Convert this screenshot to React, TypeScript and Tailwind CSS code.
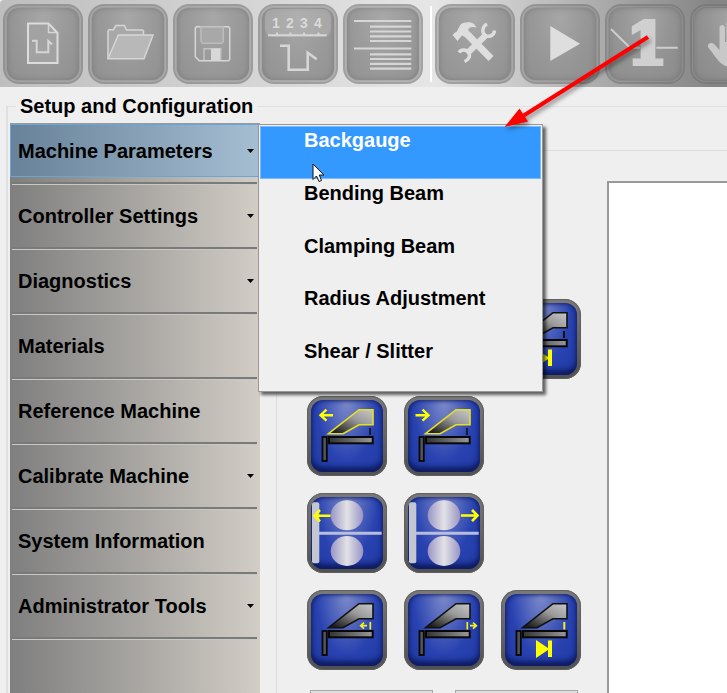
import { useState } from "react";
import type { ReactNode } from "react";
import clsx from "clsx";

type Item = { label: string; hasMenu?: boolean };

const sections: Item[] = [
  { label: "Machine Parameters", hasMenu: true },
  { label: "Controller Settings", hasMenu: true },
  { label: "Diagnostics", hasMenu: true },
  { label: "Materials" },
  { label: "Reference Machine" },
  { label: "Calibrate Machine", hasMenu: true },
  { label: "System Information" },
  { label: "Administrator Tools", hasMenu: true },
];

const parameterItems = [
  "Backgauge",
  "Bending Beam",
  "Clamping Beam",
  "Radius Adjustment",
  "Shear / Slitter",
];

function ToolButton({ label, children }: { label: string; children: ReactNode }) {
  return (
    <button
      aria-label={label}
      className="size-20 shrink-0 rounded-2xl border-2 border-neutral-500/15 bg-neutral-500/50 p-[2px] shadow-[inset_0_0_1px_1px_rgba(255,255,255,0.12)]"
    >
      <span className="block size-full rounded-xl bg-radial-[at_50%_15%] from-[#a8a8a8]/90 via-[#989898]/80 to-[#8c8c8c]/80 shadow-[inset_0_0_5px_rgba(90,90,90,0.4)]">
        <svg viewBox="4 4 72 72" className="size-full" fill="none" stroke="#d6d6d6" strokeWidth="1.5">
          {children}
        </svg>
      </span>
    </button>
  );
}

function Toolbar() {
  return (
    <header className="flex shrink-0 gap-[5px] overflow-hidden rounded-tl bg-linear-to-r from-[#bebebe] from-0% via-[#e6e6e6] via-60% to-[#858585] to-98% px-[3px] pt-1 pb-[3px]">
      <ToolButton label="New">
        <path d="M25 19.5H45.5L54.5 29V59H25Z" fill="#a2a2a2" stroke="#dcdcdc" strokeWidth="2" />
        <path d="M45.5 19.5V28.5H54.5" />
        <path d="M29 36.7H33.7V48.3H45.3V37L49 40.5" strokeWidth="2" />
      </ToolButton>
      <ToolButton label="Open">
        <path d="M20 54.7V27L21 25.7H25.5L28 21.5H36.5L38.5 26H54.5L55.5 27V31" fill="#a8a8a8" />
        <path d="M30.3 31H65L56 54.7H20Z" fill="#b8b8b8" />
      </ToolButton>
      <ToolButton label="Save">
        <path d="M23.5 22.7H55.5L56.7 24V55.5L55.5 56.7H26.3L22.3 52.7V24Z" />
        <path d="M28 23V37.5L29.5 39.3H48.8L50.3 37.5V23Z" fill="#a8a8a8" stroke="#bcbcbc" />
        <path d="M31 56V44.7H47.7V56" stroke="#c2c2c2" />
        <path d="M38 44.5H47V56H38Z" fill="#d8d8d8" stroke="none" />
      </ToolButton>
      <ToolButton label="Bend sequence">
        <rect x="7" y="5" width="66" height="28" rx="8" fill="#bababa" stroke="none" opacity="0.45" />
        <g fill="#dadada" stroke="none" className="font-['Liberation_Sans',sans-serif] text-[14px] font-bold" textAnchor="middle">
          <text x="18" y="24">1</text>
          <text x="32" y="24">2</text>
          <text x="46" y="24">3</text>
          <text x="60" y="24">4</text>
        </g>
        <path d="M10 31.3H68.7M19 31V28.5M32.5 31V28.5M46 31V28.5M60.5 31V28.5" strokeWidth="2" />
        <path d="M22 41.7H30.7V65.7H49.7V48.8L58.7 55.3" strokeWidth="2.6" />
      </ToolButton>
      <ToolButton label="Program list">
        <path
          d="M11 17H68.3M27 22.7H68.3M27 27.5H68.3M27 32.3H68.3M27 37H68.3M11 44.5H68.3M27 50.3H68.3M27 55H68.3M27 59.8H68.3M27 64.6H68.3"
          strokeWidth="2.2"
        />
      </ToolButton>
      <div className="my-[2px] mr-[-2px] ml-[2px] w-[2px] shrink-0 bg-white" />
      <ToolButton label="Setup">
        <g stroke="#dedede">
          <path d="M17.5 31L20 28.5L21.5 28L25.5 20.5C29 18 36 17.5 39 20L41.5 23.5C38 22.5 34 22.5 33 26L34 29.5L30 33L27 31.5L22.5 37Z" fill="#dedede" stroke="none" />
          <path d="M30 28L56 54.5" strokeWidth="7" />
          <path d="M51.5 30.5L32 49.5" strokeWidth="6" />
          <path d="M52 20C47 22.5 46.5 29.5 50.5 31.5S59 31.5 59.5 26.5" strokeWidth="3.4" />
          <path d="M24 48.5C26 45.5 31 45 33.5 48.5S33.5 56 29.5 57.5" strokeWidth="3.4" />
        </g>
      </ToolButton>
      <ToolButton label="Run">
        <path d="M30.3 22L60 39.7L30.3 57Z" fill="#dedede" stroke="none" />
      </ToolButton>
      <ToolButton label="Single step">
        <path d="M6 25L25 43.7H35M51.3 43.7H72.7" stroke="#cdcdcd" strokeWidth="2" />
        <text
          x="42"
          y="60"
          textAnchor="middle"
          fill="#d0d0d0"
          stroke="#d0d0d0"
          strokeWidth="4"
          className="font-['DejaVu_Serif','Liberation_Serif',serif] text-[58px] font-bold"
        >
          1
        </text>
      </ToolButton>
      <ToolButton label="Manual">
        <path
          d="M18 43C17 39 22 37.5 25 41L29.5 46V24C29.5 20 35 20 35 24V38H36.5V19C36.5 15 42 15 42 19V38H43.5V22C43.5 18 49 18 49 22V39H50.5V28C50.5 24 56 24 56 28V48C56 58 50 63 42 63C34 63 30 59 27 55Z"
          fill="#c8c8c8"
          stroke="none"
        />
      </ToolButton>
    </header>
  );
}

function Sidebar({ active, onSelect }: { active: string; onSelect: (label: string) => void }) {
  return (
    <nav className="relative w-[250px] shrink-0 border-t border-[#999] bg-linear-to-r from-[#7f7f7f] to-[#d2cdc5]">
      <ul>
        {sections.map(({ label, hasMenu }) => (
          <li key={label}>
            <button
              onClick={() => onSelect(label)}
              className={clsx(
                "flex h-[53px] w-full items-center justify-between border pr-[5px] pl-[7px] text-left",
                active === label
                  ? "border-[#6aa5d8] bg-linear-to-r from-[#688299] to-[#a5bed2]"
                  : "border-transparent"
              )}
            >
              {label}
              {hasMenu && (
                <svg viewBox="0 0 7 4" className="h-1 w-[7px]">
                  <path d="M0 0H7L3.5 4Z" />
                </svg>
              )}
            </button>
            <div className="mr-[3px] ml-[2px] mt-[5px] mb-1 h-[3px] border-t-2 border-[#7a7a78] bg-[#c8c8c4]" />
          </li>
        ))}
      </ul>
      {active === "Machine Parameters" && <ParameterMenu />}
    </nav>
  );
}

function ParameterMenu() {
  return (
    <div
      role="menu"
      className="absolute top-0 left-full z-10 -ml-[2px] flex h-[268px] w-[285px] flex-col border border-[#999] bg-[#efefef] p-px shadow-[3px_3px_3px_rgba(0,0,0,0.6)]"
    >
      {parameterItems.map((item, i) => (
        <button
          key={item}
          role="menuitem"
          className={clsx(
            "flex flex-1 items-start border pt-px pl-[43px] text-left",
            i === 0 ? "border-[#7abaff] bg-[#3399ff] text-white" : "border-transparent"
          )}
        >
          {item}
        </button>
      ))}
      <svg viewBox="0 0 13 20" className="pointer-events-none absolute top-[38px] left-[53px] h-5 w-[13px]">
        <path d="M1 1V16.5L4.5 13L7 18.5L9.5 17.5L7.3 12H12Z" fill="#fff" stroke="#111" />
      </svg>
    </div>
  );
}

function BlueButton({ label, className, children }: { label: string; className?: string; children: ReactNode }) {
  return (
    <button
      aria-label={label}
      className={clsx(
        "size-20 rounded-2xl bg-linear-to-b from-[#7a7a7a] to-[#505050] p-1 shadow-[inset_0_0_1px_1px_#606060]",
        className
      )}
    >
      <span className="block size-full rounded-xl bg-radial-[at_50%_0%] from-[#7f8cca] via-[#2842b0] via-60% to-[#1f3aa2] shadow-[inset_0_0_4px_1px_#12206e,inset_0_-7px_6px_-3px_#0a1450]">
        <svg viewBox="4 4 72 72" className="size-full" fill="none">
          <defs>
            <linearGradient id="steel" x1="0" y1="1" x2="1" y2="0">
              <stop offset="0.1" stopColor="#1c1c1c" />
              <stop offset="0.6" stopColor="#999" />
              <stop offset="1" stopColor="#c8c8c8" />
            </linearGradient>
            <linearGradient id="bar" x1="0" x2="1">
              <stop offset="0" stopColor="#333" />
              <stop offset="1" stopColor="#999" />
            </linearGradient>
            <linearGradient id="roll" x1="0" x2="1">
              <stop offset="0" stopColor="#9a94c4" />
              <stop offset="0.5" stopColor="#e2e2e6" />
              <stop offset="1" stopColor="#9a94c4" />
            </linearGradient>
          </defs>
          {children}
        </svg>
      </span>
    </button>
  );
}

function Beam({ outline = "#111" }: { outline?: string }) {
  return (
    <>
      <path d="M21.5 37.7L52 13.7H66V28.7H52L36 37.7Z" fill="url(#steel)" stroke={outline} strokeWidth="1.6" />
      <rect x="22" y="41" width="43.7" height="6.3" fill="url(#bar)" stroke="#080808" strokeWidth="2" />
      <rect x="15.5" y="41" width="4.3" height="24" fill="#555" stroke="#080808" strokeWidth="1.8" />
    </>
  );
}

function Rolls() {
  return (
    <>
      <rect x="5" y="9.3" width="7.3" height="61" rx="2" fill="#c4c6d2" />
      <path d="M12 40.3H74.7" stroke="#b9bedd" strokeWidth="3" />
      <ellipse cx="40" cy="22.3" rx="16.3" ry="15" fill="url(#roll)" />
      <ellipse cx="40" cy="58" rx="16.3" ry="15" fill="url(#roll)" />
    </>
  );
}

function MachineControls() {
  return (
    <div className="flex shrink-0 flex-col pt-[148px] pr-[26px] pl-[30px]">
      <div className="grid grid-cols-[repeat(3,80px)] gap-[17px]">
        <BlueButton label="Open beam to stop" className="col-start-3">
          <Beam />
          <path d="M63 32V39" stroke="#111" strokeWidth="2" />
          <path d="M35 50L47 58V50.5H51V67H47V60L35 68Z" fill="#ff0" />
        </BlueButton>
        <BlueButton label="Beam back" className="col-start-1">
          <Beam outline="#e6e020" />
          <path d="M63 32V39" stroke="#111" strokeWidth="1.6" />
          <path d="M26 19.2H14M19.5 13.7L13.5 19.2L19.5 24.7" stroke="#ff0" strokeWidth="2.4" />
        </BlueButton>
        <BlueButton label="Beam forward">
          <Beam outline="#e6e020" />
          <path d="M63 32V39" stroke="#111" strokeWidth="1.6" />
          <path d="M11.5 19.2H24M18.5 13.7L24.5 19.2L18.5 24.7" stroke="#ff0" strokeWidth="2.4" />
        </BlueButton>
        <BlueButton label="Rolls left" className="col-start-1">
          <Rolls />
          <path d="M23.5 22.7H8M13 17L7.5 22.7L13 28.4" stroke="#ff0" strokeWidth="2.6" />
        </BlueButton>
        <BlueButton label="Rolls right">
          <Rolls />
          <path d="M57 22.5H73M68 17L73.5 22.5L68 28.2" stroke="#ff0" strokeWidth="2.6" />
        </BlueButton>
        <BlueButton label="Gauge in" className="col-start-1">
          <Beam />
          <path d="M63.3 32V39.5M60 35.7H54M57 32.7L53.7 35.7L57 38.7" stroke="#f5f01e" strokeWidth="1.7" />
        </BlueButton>
        <BlueButton label="Gauge out">
          <Beam />
          <path d="M63.3 32V39.5M66 35.7H72M69 32.7L72.3 35.7L69 38.7" stroke="#f5f01e" strokeWidth="1.7" />
        </BlueButton>
        <BlueButton label="Gauge to stop">
          <Beam />
          <path d="M63.3 32V39.5" stroke="#f5f01e" strokeWidth="2" />
          <path d="M35 50L47 58V50.5H51V67H47V60L35 68Z" fill="#ff0" />
        </BlueButton>
      </div>
      <div className="mt-5 flex gap-[22px] pl-[3px]">
        <input aria-label="Actual position" readOnly className="h-8 w-[123px] border border-[#a8a8a8] bg-[#dedede]" />
        <input aria-label="Target position" readOnly className="h-8 w-[123px] border border-[#a8a8a8] bg-[#dedede]" />
      </div>
    </div>
  );
}

// Red arrow pointing at the open menu
function Callout() {
  return (
    <svg
      viewBox="0 0 150 98"
      className="pointer-events-none absolute top-[33px] left-[503px] z-20 h-[98px] w-[150px] drop-shadow-[2px_3px_2px_rgba(0,0,0,0.4)]"
    >
      <path d="M145 4L20 83" stroke="#f00" strokeWidth="4" />
      <path d="M1.5 94L16.5 75.5L25 88.5Z" fill="#f00" />
    </svg>
  );
}

export default function App() {
  const [active, setActive] = useState("Machine Parameters");

  return (
    <main className="relative flex h-screen flex-col overflow-hidden bg-[#efefef] font-['Liberation_Sans',Arial,sans-serif] text-xl leading-6 font-bold text-black">
      <Toolbar />
      <fieldset className="mt-[7px] ml-[6px] min-h-0 min-w-0 flex-1 border-t border-l-2 border-[#e0e0e0]">
        <legend className="ml-2 px-1">Setup and Configuration</legend>
        <div className="flex h-full pt-[5px] pl-[2px]">
          <Sidebar active={active} onSelect={setActive} />
          <section className="mt-[27px] ml-4 flex min-w-0 flex-1 border-t border-l border-[#dcdcdc]">
            <MachineControls />
            <div className="mt-[30px] min-w-0 flex-1 border-t-2 border-l-2 border-[#999] bg-white" />
          </section>
        </div>
      </fieldset>
      <Callout />
    </main>
  );
}
